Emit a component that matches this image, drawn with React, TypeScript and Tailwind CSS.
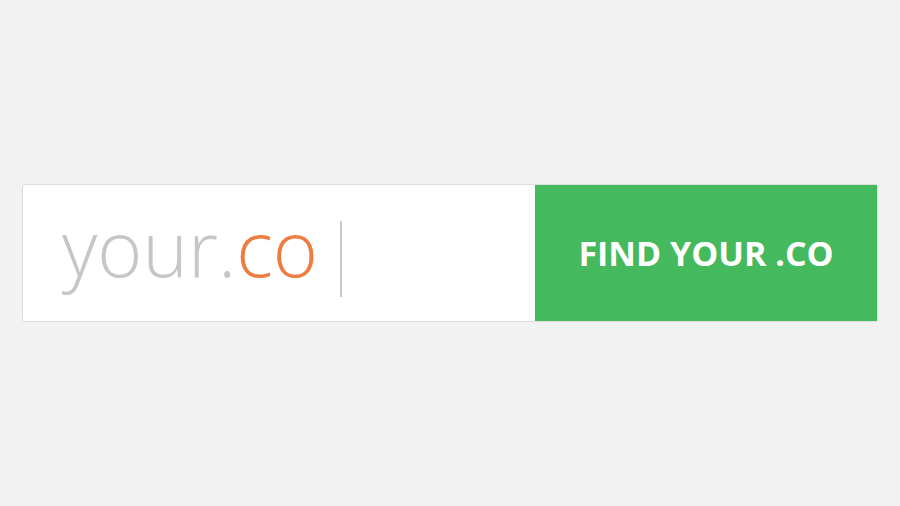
export default function App() {
  return (
    <div className="flex h-[506px] w-full items-center justify-center bg-[#f2f2f2]">
      <div className="flex h-[138px] w-[856px] rounded-[3px] border border-[#dcdcdc] bg-white">
        {/* Domain input */}
        <div
          className="flex flex-1 items-start pl-[39px] pt-[24px]"
          style={{ fontFamily: '"Open Sans", sans-serif' }}
        >
          <span className="text-[77px] font-light leading-none text-[#c6c6c6]">
            your.<span className="text-[#ef7b3e]">co</span>
          </span>
          <span className="ml-[22px] mt-[12px] h-[76px] w-[2px] bg-[#c8c8c8]" />
        </div>

        {/* Search button */}
        <button
          className="flex w-[342px] items-center justify-center bg-[#44b95d] text-[34px] font-bold text-white"
          style={{ fontFamily: '"Open Sans", sans-serif' }}
        >
          FIND YOUR .CO
        </button>
      </div>
    </div>
  );
}
